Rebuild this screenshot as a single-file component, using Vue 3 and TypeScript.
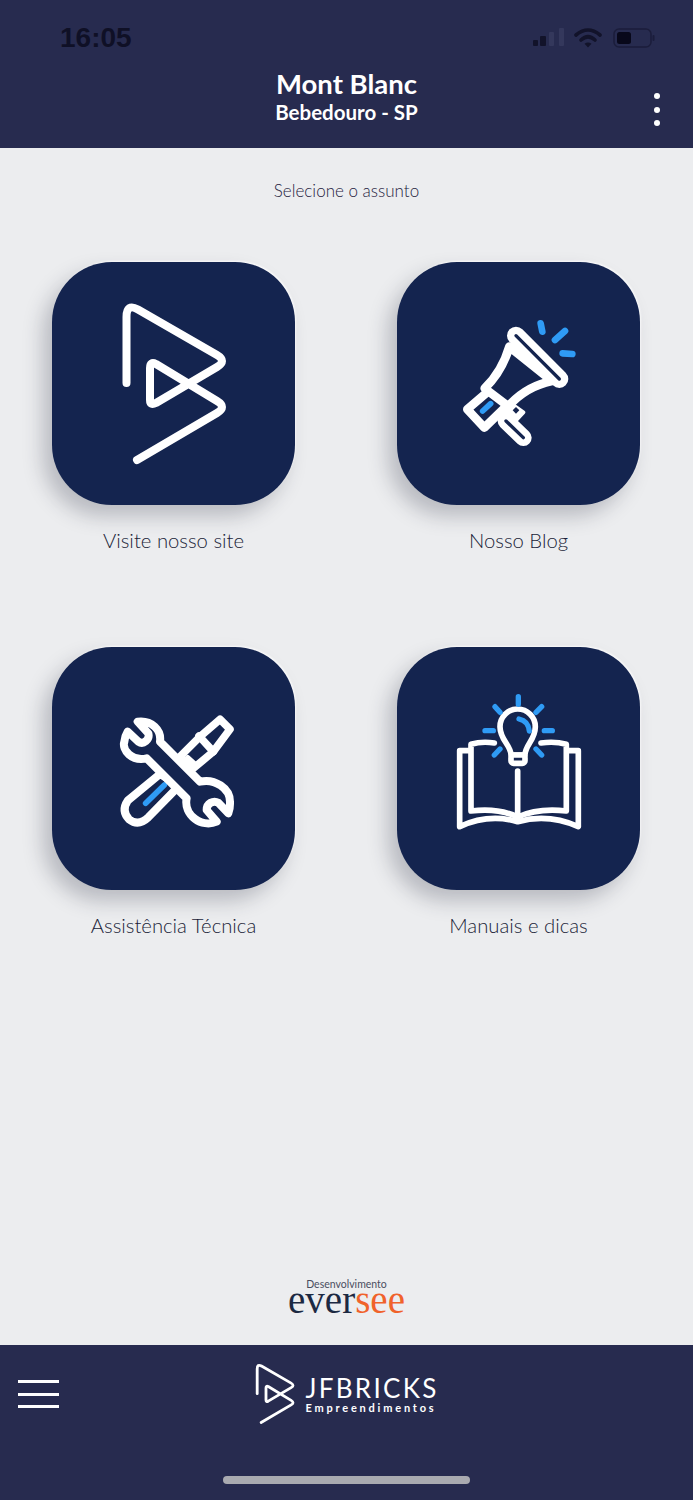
<script setup lang="ts">
const logoPath =
  'M74.5 121 V55 Q74.5 41 86 47.500 L165 93 Q175 99 165 105 L104 141 Q98 144 98 138 V106 Q98 99 104 102 L165 139 Q175 145 165 151 L85 198'

const tiles = [
  { id: 'site', label: 'Visite nosso site' },
  { id: 'blog', label: 'Nosso Blog' },
  { id: 'tools', label: 'Assistência Técnica' },
  { id: 'manual', label: 'Manuais e dicas' },
]
</script>

<template>
  <div class="page">
    <header class="top">
      <div class="status">
        <span class="clock">16:05</span>
        <div class="status-icons">
          <svg width="32" height="20" viewBox="0 0 32 20">
            <rect x="0" y="12" width="5" height="6" rx="1" fill="#12132a" />
            <rect x="7" y="8" width="6" height="10" rx="1" fill="#12132a" />
            <rect x="16" y="4" width="5" height="14" rx="1" fill="#34385c" />
            <rect x="26" y="0" width="5" height="18" rx="1" fill="#34385c" />
          </svg>
          <svg width="28" height="22" viewBox="0 0 28 22" fill="none" stroke="#12132a" stroke-width="3.600" stroke-linecap="round">
            <path d="M2 8 Q14 -2 26 8" />
            <path d="M7 13 Q14 6.500 21 13" />
            <path d="M14 20.500 L10.500 16.800 Q14 14 17.500 16.800 Z" fill="#12132a" stroke="none" />
          </svg>
          <svg class="battery" width="42" height="20" viewBox="0 0 42 20">
            <rect x="1" y="1" width="37" height="18" rx="5" fill="none" stroke="#1b1d3b" stroke-width="1.500" />
            <rect x="4" y="4" width="14" height="12" rx="2.500" fill="#08081a" />
            <rect x="39.500" y="7" width="2" height="6" rx="1" fill="#1b1d3b" />
          </svg>
        </div>
      </div>
      <div class="title-row">
        <span></span>
        <div class="title">
          <div class="name">Mont Blanc</div>
          <div class="city">Bebedouro - SP</div>
        </div>
        <div class="kebab"><i></i><i></i><i></i></div>
      </div>
    </header>

    <main class="content">
      <p class="hint">Selecione o assunto</p>
      <div class="grid">
        <div v-for="tile in tiles" :key="tile.id" class="item">
          <div class="tile">
            <svg class="tile-icon" viewBox="0 0 243 243" fill="none" stroke-linecap="round" stroke-linejoin="round">
              <path v-if="tile.id === 'site'" :d="logoPath" stroke="#fff" stroke-width="8" />

              <g v-else-if="tile.id === 'blog'" transform="translate(43 43) scale(.3333)">
                <path d="M146 258 L82 313 L133 368 L205 298 Z" fill="#14244f" stroke="#fff" stroke-width="26" />
                <path d="M128 318 L152 296" stroke="#2f9bf5" stroke-width="17" />
                <path d="M198 348 L250 398" stroke="#fff" stroke-width="50" />
                <path d="M198 348 L250 398" stroke="#14244f" stroke-width="10" />
                <path d="M212 295 L250 322 L222 352 L190 320 Z" fill="#fff" stroke="#fff" stroke-width="12" />
                <path d="M228 306 L238 316 L228 326 L218 316 Z" fill="#14244f" />
                <path d="M208 125 Q186 200 134 250 L205 304 Q258 244 336 228 Z" fill="#14244f" stroke="#fff" stroke-width="26" />
                <path d="M228 92 L358 222" stroke="#fff" stroke-width="54" />
                <path d="M228 92 L358 222" stroke="#14244f" stroke-width="10" />
                <path d="M302 55 L307 80 M345 105 L375 78 M368 145 L397 147" stroke="#2f9bf5" stroke-width="20" />
              </g>

              <g v-else-if="tile.id === 'tools'" transform="translate(53 53) scale(.3333)">
                <path d="M165 222 L68 302 Q48 332 72 358 Q100 380 130 352 L222 258 Z" stroke="#fff" stroke-width="24" />
                <path d="M122 310 L178 255" stroke="#2f9bf5" stroke-width="17" />
                <path d="M225 170 L285 110 L345 58 L375 88 L325 155 L264 206 Z" fill="#14244f" stroke="#fff" stroke-width="23" />
                <path d="M282 108 L325 155" stroke="#fff" stroke-width="23" />
                <path d="M248 172 L268 190" stroke="#fff" stroke-width="14" />
                <path d="M98 65 C140 60 170 90 165 125 L285 245 C330 235 375 265 375 305 Q376 325 370 340 L340 308 C325 300 305 310 305 330 L335 365 C290 385 235 345 245 295 L125 175 C80 185 50 150 58 125 Q60 108 68 95 L100 125 C115 135 135 120 130 100 Z" fill="#14244f" stroke="#fff" stroke-width="24" />
              </g>

              <g v-else transform="translate(48 38) scale(.3333)">
                <path d="M148 174 Q110 168 78 178 V378 Q160 368 218 396 Q280 368 364 378 V178 Q330 168 288 174" stroke="#fff" stroke-width="17" />
                <path d="M72 197 H44 V425 Q130 385 218 410 Q310 385 400 425 V197 H372 M218 258 V396" stroke="#fff" stroke-width="17" />
                <path d="M198 210 C198 180 165 165 165 125 A53 53 0 0 1 271 125 C271 165 240 180 240 210 Z" fill="#14244f" stroke="#fff" stroke-width="17" />
                <rect x="198" y="210" width="42" height="25" rx="8" fill="#14244f" stroke="#fff" stroke-width="17" />
                <path d="M222 102 Q250 108 253 138 M220 35 V58 M150 65 L165 82 M290 65 L273 82 M120 137 H145 M298 137 H322 M148 210 L165 192 M290 210 L273 192" stroke="#2f9bf5" stroke-width="16" />
              </g>
            </svg>
          </div>
          <div class="label">{{ tile.label }}</div>
        </div>
      </div>

      <div class="credit">
        <div class="credit-small">Desenvolvimento</div>
        <div class="credit-brand">ever<span>see</span></div>
      </div>
    </main>

    <footer class="bottom">
      <div class="bottom-row">
        <div class="burger"><i></i><i></i><i></i></div>
        <div class="brand">
          <svg class="brand-mark" viewBox="66 38 112 168" fill="none" stroke-linecap="round" stroke-linejoin="round">
            <path :d="logoPath" stroke="#fff" stroke-width="7.500" />
          </svg>
          <div class="brand-text">
            <div class="brand-name">JFBRICKS</div>
            <div class="brand-sub">Empreendimentos</div>
          </div>
        </div>
      </div>
      <div class="home-bar"></div>
    </footer>
  </div>
</template>

<style scoped>
.page {
  display: flex;
  flex-direction: column;
  width: 693px;
  height: 1500px;
  background: #ecedef;
  font-family: Lato, "Open Sans", sans-serif;
  overflow: hidden;
}

.top {
  height: 148px;
  box-sizing: border-box;
  background: #272b4f;
  padding-top: 20px;
}

.status {
  display: flex;
  justify-content: space-between;
  align-items: center;
  height: 36px;
  padding: 0 38px 0 60px;
}

.clock {
  font-family: "Liberation Sans", Arial, sans-serif;
  font-size: 28px;
  font-weight: 700;
  color: #0f1026;
}

.status-icons {
  display: flex;
  align-items: center;
  gap: 9px;
}

.battery {
  margin-left: 2px;
}

.title-row {
  display: grid;
  grid-template-columns: 1fr auto 1fr;
  align-items: start;
  margin-top: 12px;
  padding: 0 33px;
}

.title {
  text-align: center;
  color: #fff;
}

.name {
  font-size: 27.500px;
  line-height: 32px;
  font-weight: 700;
}

.city {
  font-size: 20.500px;
  line-height: 24px;
  font-weight: 700;
}

.kebab {
  justify-self: end;
  display: flex;
  flex-direction: column;
  gap: 7.500px;
  margin-top: 25px;
}

.kebab i {
  display: block;
  width: 6px;
  height: 6px;
  border-radius: 50%;
  background: #fff;
}

.content {
  flex: 1;
  display: flex;
  flex-direction: column;
}

.hint {
  margin: 32px 0 0;
  text-align: center;
  font-size: 17px;
  line-height: 22px;
  font-weight: 300;
  color: #1f2240;
}

.grid {
  display: grid;
  grid-template-columns: 243px 243px;
  column-gap: 102px;
  row-gap: 95px;
  margin-top: 60px;
  padding-left: 52px;
}

.tile {
  height: 243px;
  border-radius: 60px;
  background: #14244f;
  box-shadow: -9px 11px 20px rgba(40, 44, 60, 0.26), 1px -1px 2px #fff;
}

.tile-icon {
  display: block;
  width: 243px;
  height: 243px;
}

.label {
  margin-top: 23px;
  text-align: center;
  font-size: 20.300px;
  line-height: 24px;
  font-weight: 300;
  color: #1a1d38;
}

.credit {
  margin-top: auto;
  padding-bottom: 35px;
  text-align: center;
}

.credit-small {
  font-size: 10.500px;
  line-height: 12px;
  color: #4a4d60;
}

.credit-brand {
  font-family: "Liberation Serif", serif;
  font-size: 39px;
  line-height: 20px;
  color: #1c2942;
}

.credit-brand span {
  color: #f0622b;
}

.bottom {
  height: 155px;
  box-sizing: border-box;
  background: #272b4f;
  padding-top: 16px;
}

.bottom-row {
  display: grid;
  grid-template-columns: 1fr auto 1fr;
  align-items: center;
  padding: 0 18px;
}

.burger {
  display: flex;
  flex-direction: column;
  gap: 9.500px;
  width: 41px;
}

.burger i {
  display: block;
  height: 3px;
  background: #fff;
}

.brand {
  display: flex;
  align-items: center;
  gap: 9px;
  color: #fff;
}

.brand-mark {
  width: 42px;
  height: 66px;
}

.brand-text {
  padding-top: 2px;
}

.brand-name {
  font-size: 26px;
  line-height: 26px;
  letter-spacing: 2.300px;
}

.brand-sub {
  font-size: 11px;
  line-height: 14px;
  font-weight: 700;
  letter-spacing: 2.800px;
}

.home-bar {
  width: 247px;
  height: 8px;
  margin: 49px auto 0;
  border-radius: 4px;
  background: #a9aab0;
}
</style>

<style>
html,
body {
  margin: 0;
  background: #ecedef;
}
</style>
